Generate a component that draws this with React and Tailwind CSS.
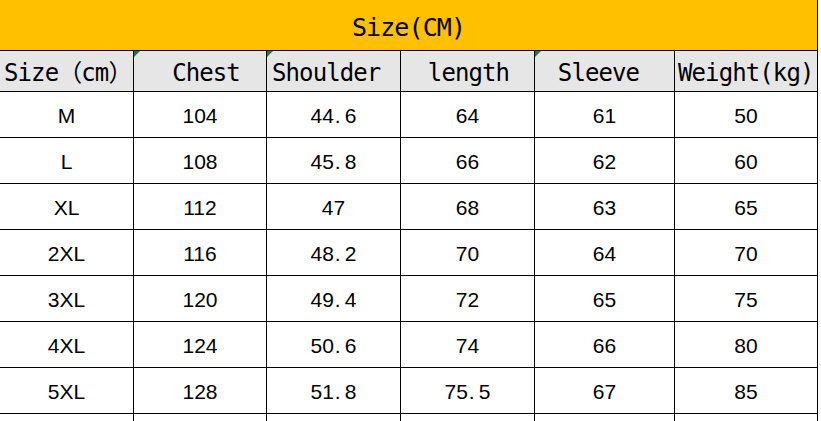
import React from 'react';

const mono = { fontFamily: '"DejaVu Sans Mono", "Noto Sans CJK SC", monospace' };

const rows = [
  ['M', '104', '44.6', '64', '61', '50'],
  ['L', '108', '45.8', '66', '62', '60'],
  ['XL', '112', '47', '68', '63', '65'],
  ['2XL', '116', '48.2', '70', '64', '70'],
  ['3XL', '120', '49.4', '72', '65', '75'],
  ['4XL', '124', '50.6', '74', '66', '80'],
  ['5XL', '128', '51.8', '75.5', '67', '85'],
];

const cols = 'grid grid-cols-[134px_133px_134px_134px_140px_143px] w-[818px]';

// wide dot like the spreadsheet font
const Num = ({ v }) => {
  const [a, b] = v.split('.');
  if (b === undefined) return <span>{v}</span>;
  return (
    <span>
      {a}
      <span className="inline-block w-[11px] pl-[1px] text-left">.</span>
      {b}
    </span>
  );
};

const Tri = () => (
  <span className="absolute left-0 top-0 w-0 h-0 border-t-[6px] border-r-[6px] border-t-[#1d7a3a] border-r-transparent" />
);

const App = () => (
  <div className="w-[821px] h-[421px] bg-white overflow-hidden text-black">
    <div
      className="w-[818px] h-[51px] bg-[#ffc000] border-r border-b border-black flex items-center justify-center pt-[5px] text-[25px] tracking-[-0.9px]"
      style={mono}
    >
      Size(CM)
    </div>

    <div className={`${cols} h-[41px] bg-[#e7e6e6] text-[24px] tracking-[-0.9px]`} style={mono}>
      <div className="border-r border-b border-black flex items-center pt-[3px] pl-[4px] whitespace-nowrap overflow-hidden">Size（cm）</div>
      <div className="relative border-r border-b border-black flex items-center justify-center pt-[3px] pl-[12px]"><Tri />Chest</div>
      <div className="relative border-r border-b border-black flex items-center pt-[3px] pl-[5px] whitespace-nowrap"><Tri />Shoulder</div>
      <div className="border-r border-b border-black flex items-center justify-center pt-[3px] pl-[2px]">length</div>
      <div className="relative border-r border-b border-black flex items-center justify-center pt-[3px] pr-[12px]"><Tri />Sleeve</div>
      <div className="border-r border-b border-black flex items-center pt-[3px] pl-[3px] whitespace-nowrap">Weight(kg)</div>
    </div>

    {rows.map(r => (
      <div key={r[0]} className={`${cols} h-[46px] text-[21px]`} style={{ fontFamily: '"Liberation Sans", Arial, sans-serif' }}>
        {r.map((v, i) => (
          <div key={i} className="border-r border-b border-black flex items-center justify-center pt-[2px]">
            <Num v={v} />
          </div>
        ))}
      </div>
    ))}

    <div className={`${cols} h-[46px]`}>
      {[0, 1, 2, 3, 4, 5].map(i => (
        <div key={i} className="border-r border-black" />
      ))}
    </div>
  </div>
);

export default App;
